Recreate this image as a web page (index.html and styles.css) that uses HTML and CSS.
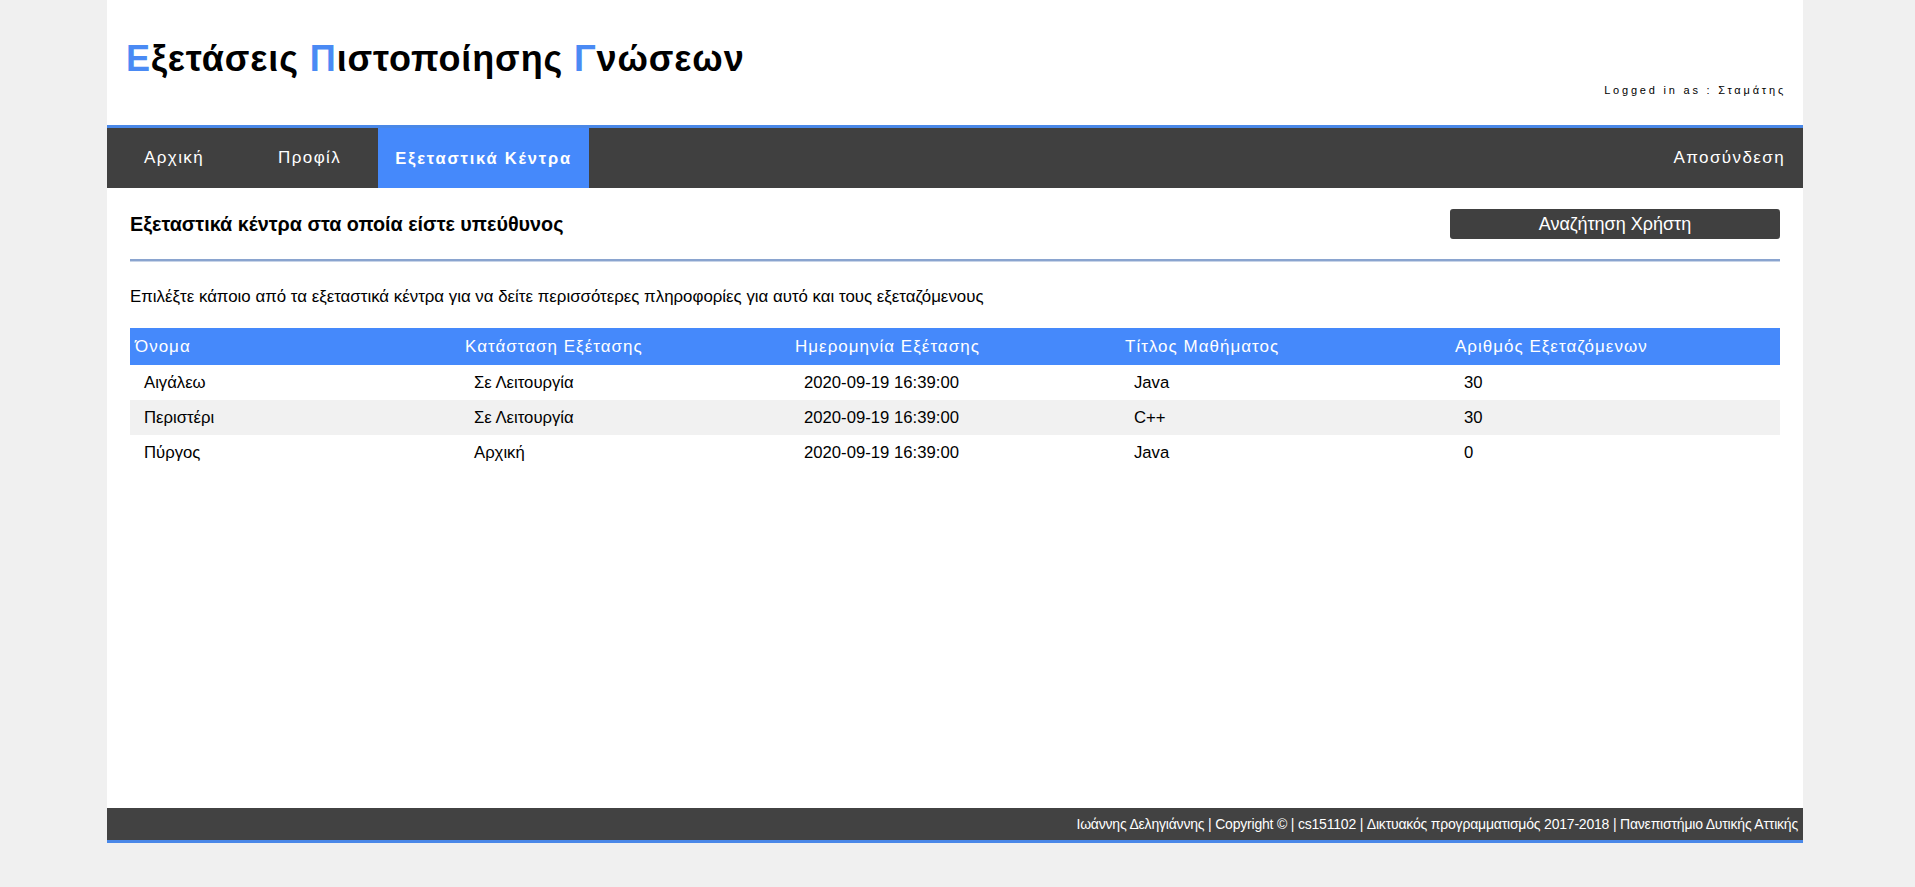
FILE: index.html
```html
<!DOCTYPE html>
<html lang="el">
<head>
<meta charset="utf-8">
<title>Εξετάσεις Πιστοποίησης Γνώσεων</title>
<link rel="stylesheet" href="styles.css">
</head>
<body>
<div class="page">
  <header class="top">
    <h1 class="brand"><span class="hl">Ε</span>ξετάσεις <span class="hl">Π</span>ιστοποίησης <span class="hl">Γ</span>νώσεων</h1>
    <div class="logged">Logged in as : Σταμάτης</div>
  </header>
  <nav class="menu">
    <a class="item" href="#">Αρχική</a>
    <a class="item" href="#">Προφίλ</a>
    <a class="item active" href="#">Εξεταστικά Κέντρα</a>
    <a class="item logout" href="#">Αποσύνδεση</a>
  </nav>
  <main class="content">
    <div class="title-row">
      <h2 class="heading">Εξεταστικά κέντρα στα οποία είστε υπεύθυνος</h2>
      <button class="search-btn" type="button">Αναζήτηση Χρήστη</button>
    </div>
    <div class="rule"></div>
    <p class="intro">Επιλέξτε κάποιο από τα εξεταστικά κέντρα για να δείτε περισσότερες πληροφορίες για αυτό και τους εξεταζόμενους</p>
    <table class="centers">
      <thead>
        <tr>
          <th>Όνομα</th>
          <th>Κατάσταση Εξέτασης</th>
          <th>Ημερομηνία Εξέτασης</th>
          <th>Τίτλος Μαθήματος</th>
          <th>Αριθμός Εξεταζόμενων</th>
        </tr>
      </thead>
      <tbody>
        <tr>
          <td>Αιγάλεω</td>
          <td>Σε Λειτουργία</td>
          <td>2020-09-19 16:39:00</td>
          <td>Java</td>
          <td>30</td>
        </tr>
        <tr>
          <td>Περιστέρι</td>
          <td>Σε Λειτουργία</td>
          <td>2020-09-19 16:39:00</td>
          <td>C++</td>
          <td>30</td>
        </tr>
        <tr>
          <td>Πύργος</td>
          <td>Αρχική</td>
          <td>2020-09-19 16:39:00</td>
          <td>Java</td>
          <td>0</td>
        </tr>
      </tbody>
    </table>
  </main>
  <footer class="foot">Ιωάννης Δεληγιάννης | Copyright © | cs151102 | Δικτυακός προγραμματισμός 2017-2018 | Πανεπιστήμιο Δυτικής Αττικής</footer>
</div>
</body>
</html>
```
FILE: styles.css
```css
html, body {
  margin: 0;
  padding: 0;
}
body {
  background: #f0f0f0;
  font-family: "Liberation Sans", Arial, sans-serif;
  color: #000;
}
.page {
  margin-left: 107px;
  width: 1696px;
  height: 843px;
  background: #fff;
  display: flex;
  flex-direction: column;
}
.top {
  height: 125px;
  box-sizing: border-box;
  padding: 41px 19px 0 19px;
}
.brand {
  margin: 0;
  font-size: 36px;
  line-height: 36px;
  font-weight: bold;
  letter-spacing: 0.9px;
  color: #000;
}
.hl {
  color: #4a8af4;
}
.logged {
  margin-top: 8px;
  text-align: right;
  font-size: 11px;
  line-height: 11px;
  letter-spacing: 2.8px;
  margin-right: -2px;
}
.menu {
  display: flex;
  height: 60px;
  border-top: 3px solid #4a88e8;
  background: #404040;
}
.item {
  display: block;
  line-height: 60px;
  padding: 0 37px;
  color: #fff;
  text-decoration: none;
  font-size: 17px;
  letter-spacing: 1.4px;
}
.item.active {
  background: #4589fb;
  font-weight: bold;
  font-size: 16.5px;
  letter-spacing: 1.8px;
  padding: 0 17px;
}
.item.logout {
  margin-left: auto;
  padding-right: 18px;
}
.content {
  flex: 1;
  padding: 0 23px 0 23px;
}
.title-row {
  display: flex;
  justify-content: space-between;
  align-items: center;
  margin-top: 21px;
}
.heading {
  margin: 0;
  font-size: 19.8px;
  font-weight: bold;
  line-height: 24px;
}
.search-btn {
  width: 330px;
  height: 30px;
  border: none;
  border-radius: 3px;
  background: #404040;
  color: #fff;
  font-family: "Liberation Sans", Arial, sans-serif;
  font-size: 18px;
  padding: 0;
}
.rule {
  margin-top: 20px;
  height: 0;
  border-top: 2px solid #8aa4cf;
  border-bottom: 1px solid #c8d4e8;
}
.intro {
  margin: 26px 0 0 0;
  font-size: 16.85px;
  line-height: 18px;
}
.centers {
  margin-top: 22px;
  width: 100%;
  border-collapse: collapse;
  table-layout: fixed;
}
.centers th {
  height: 37px;
  padding: 0 0 0 5px;
  background: #4589fb;
  color: #fff;
  text-align: left;
  font-weight: normal;
  font-size: 17px;
  letter-spacing: 1px;
}
.centers td {
  height: 35px;
  padding: 0 0 0 14px;
  font-size: 16.7px;
}
.centers tbody tr:nth-child(2) td {
  background: #f1f1f1;
}
.foot {
  height: 32px;
  line-height: 32px;
  border-bottom: 3px solid #4a88e8;
  background: #424242;
  color: #fff;
  text-align: right;
  padding-right: 5px;
  font-size: 14px;
  letter-spacing: -0.2px;
}
```
